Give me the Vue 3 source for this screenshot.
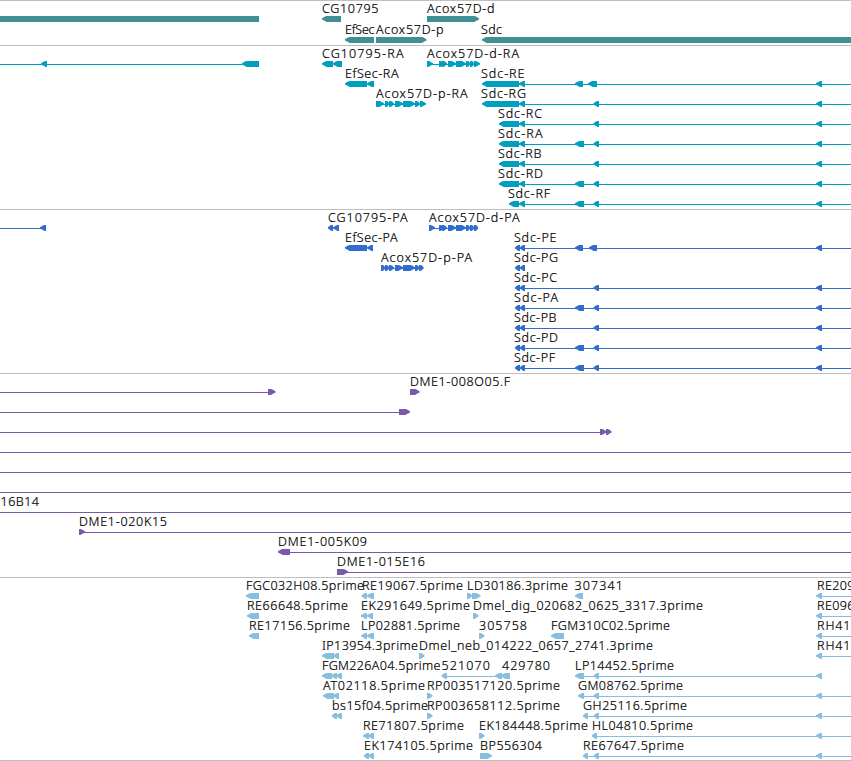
<script setup>
// Labels: [text, x, right edge]. Blocks: [start, end]. Lines: [start, end].
const W = 851
const row = (labels = [], left = [], right = [], lines = [], plain = []) => ({ labels, left, right, lines, plain })

const rnaRow = (name, x, end, start, extra) =>
  row([[name, x, end]], [[start, 519], [519, 525], ...extra, [816, 822]], [], [[519, W]])
const protRow = (name, end, extra) =>
  row([[name, 514, end]], [[515, 520], [520, 525], ...extra, [816, 822]], [], [[520, W]])

const A = [575, 584]
const B = [593.5, 599]
const full = () => row([], [], [], [[0, W]])

const tracks = [
  {
    id: 'gene',
    rows: [
      row([['CG10795', 322, 379], ['Acox57D-d', 427, 495]], [[322, 341]], [[427, 479]], [], [[0, 259]]),
      row([['EfSec', 345, 375], ['Acox57D-p', 376, 444], ['Sdc', 481, 502.5]], [[345, 374], [482, 860]], [[376, 426.5]]),
    ],
  },
  {
    id: 'rna',
    rows: [
      row(
        [['CG10795-RA', 322, 404], ['Acox57D-d-RA', 427, 519.5]],
        [[41, 47], [242, 259], [322, 333], [333, 342]],
        [[427, 433], [439, 443], [442, 447], [448, 456], [456, 466], [466, 470], [470, 474], [474, 480]],
        [[0, 247], [427, 478]],
      ),
      row(
        [['EfSec-RA', 345, 399], ['Sdc-RE', 481, 525]],
        [[345, 367], [367, 374], [482, 519], [519, 525], [575, 583], [588, 597], [816, 822]],
        [], [[519, W]],
      ),
      row(
        [['Acox57D-p-RA', 376, 468], ['Sdc-RG', 481, 526.5]],
        [[482, 519], [519, 525], B, [816, 822]],
        [[376, 384], [385, 389], [389, 394], [395, 403], [403, 415], [415, 420], [420, 426]],
        [[376, 424], [519, W]],
      ),
      rnaRow('Sdc-RC', 498, 542.5, 499, [B]),
      rnaRow('Sdc-RA', 498, 543, 499, [A, B]),
      rnaRow('Sdc-RB', 498, 542, 499, [B]),
      rnaRow('Sdc-RD', 498, 543.5, 499, [A, B]),
      rnaRow('Sdc-RF', 508, 550.5, 509, [A, B]),
    ],
  },
  {
    id: 'protein',
    rows: [
      row(
        [['CG10795-PA', 328, 408], ['Acox57D-d-PA', 429, 520]],
        [[40, 46], [328, 333], [333, 339]],
        [[429, 435], [439, 443], [442, 447], [448, 456], [456, 466], [466, 470], [470, 474], [474, 478]],
        [[0, 42], [429, 477]],
      ),
      row(
        [['EfSec-PA', 345, 398], ['Sdc-PE', 514, 557]],
        [[345, 367], [367, 373], [515, 520], [520, 525], [575, 583], [589, 597], [816, 822]],
        [], [[520, W]],
      ),
      row(
        [['Acox57D-p-PA', 381, 472.5], ['Sdc-PG', 514, 558.5]],
        [[515, 520], [520, 525]],
        [[381, 385], [385, 389], [389, 394], [395, 403], [403, 415], [415, 419], [419, 423.5]],
        [[381, 422]],
      ),
      protRow('Sdc-PC', 557.5, [B]),
      protRow('Sdc-PA', 558.5, [A, B]),
      protRow('Sdc-PB', 557, [B]),
      protRow('Sdc-PD', 558.5, [A, B]),
      protRow('Sdc-PF', 555.5, [A, B]),
    ],
  },
  {
    id: 'clone',
    rows: [
      row([['DME1-008O05.F', 410, 510.5]], [], [[268, 275.5], [410, 419.5]], [[0, 270]]),
      row([], [], [[399, 410]], [[0, 401]]),
      row([], [], [[600, 606.5], [606, 611.5]], [[0, 607]]),
      full(),
      full(),
      full(),
      row([['16B14', 0.5, 39.5]], [], [], [[0, W]]),
      row([['DME1-020K15', 79, 167.5]], [], [[79, 85]], [[79, W]]),
      row([['DME1-005K09', 278, 367.5]], [[278, 290]], [], [[288, W]]),
      row([['DME1-015E16', 337, 425.5]], [], [[337, 348]], [[340, W]]),
    ],
  },
  {
    id: 'est',
    rows: [
      row(
        [['FGC032H08.5prime', 246, 364.5], ['RE19067.5prime', 362, 463.5], ['LD30186.3prime', 467, 568.5], ['307341', 574.5, 623.5], ['RE209', 817, 855]],
        [[246, 259], [361.5, 367], [367, 374], [575, 583], [816, 822]],
        [[467, 472], [472, 480.5]], [[820, W]],
      ),
      row(
        [['RE66648.5prime', 247, 348.5], ['EK291649.5prime', 361, 470.5], ['Dmel_dig_020682_0625_3317.3prime', 473, 703.5], ['RE096', 817, 855]],
        [[247, 259], [361, 367], [367, 373], [816, 822]],
        [[473, 478.5]], [[820, W]],
      ),
      row(
        [['RE17156.5prime', 249, 350.5], ['LP02881.5prime', 361, 460.5], ['305758', 479, 527.5], ['FGM310C02.5prime', 551, 670.5], ['RH41', 817, 851]],
        [[249, 259], [361, 367], [367, 374], [551, 564], [816, 822]],
        [[479, 484.5]], [[820, W]],
      ),
      row(
        [['IP13954.3prime', 322, 418.5], ['Dmel_neb_014222_0657_2741.3prime', 419, 653.5], ['RH41', 817, 851]],
        [[322, 334], [333, 339], [816, 822]],
        [[419, 424.5]], [[820, W]],
      ),
      row(
        [['FGM226A04.5prime', 322, 441], ['521070', 441.5, 490.5], ['429780', 502, 550.5], ['LP14452.5prime', 575, 674.5]],
        [[322, 332], [331, 337], [336, 342], [441.5, 447], [495, 502], [501, 510], A, B, [816, 822]],
        [], [[445, 500], [580, 820]],
      ),
      row(
        [['AT02118.5prime', 323, 425.5], ['RP003517120.5prime', 427, 560.5], ['GM08762.5prime', 578, 683.5]],
        [[323, 334], [333, 339], [578, 584], B, [816, 822]],
        [[427, 432.5]], [[580, W]],
      ),
      row(
        [['bs15f04.5prime', 332, 428.5], ['RP003658112.5prime', 427, 560.5], ['GH25116.5prime', 583, 687.5]],
        [[332, 337], [336, 342], [583, 588], B, [816, 822]],
        [[427, 432.5]], [[585, W]],
      ),
      row(
        [['RE71807.5prime', 363, 464.5], ['EK184448.5prime', 479, 588.5], ['HL04810.5prime', 592, 693.5]],
        [[363, 369], [368, 374], [592, 597], [816, 822]],
        [[479, 484.5]], [[595, W]],
      ),
      row(
        [['EK174105.5prime', 364, 473.5], ['BP556304', 480, 542.5], ['RE67647.5prime', 583, 684.5]],
        [[364, 369], [368, 374], [583, 588], B, [816, 822]],
        [[480, 492]], [[585, W]],
      ),
    ],
  },
]

const leftArrow = ([a, b]) => {
  const n = Math.min(b, a + 6)
  return `M${a} 16.3L${n - 3} 14.5L${n - 1.5} 14H${b}V20H${n - 1.5}L${n - 3} 19L${a} 17.4Z`
}
const rightArrow = ([a, b]) => {
  const n = Math.max(a, b - 6)
  return `M${b} 16.3L${n + 3} 14.5L${n + 1.5} 14H${a}V20H${n + 1.5}L${n + 3} 19L${b} 17.4Z`
}
</script>

<template>
  <main class="browser">
    <section v-for="t in tracks" :key="t.id" class="track" :class="t.id">
      <svg v-for="(r, i) in t.rows" :key="i" class="row">
        <rect v-for="(l, k) in r.lines" :key="'l' + k" :x="l[0]" y="17" :width="l[1] - l[0]" height="1" />
        <rect v-for="(l, k) in r.plain" :key="'p' + k" :x="l[0]" y="14" :width="l[1] - l[0]" height="6" />
        <path v-for="(b, k) in r.left" :key="'a' + k" :d="leftArrow(b)" />
        <path v-for="(b, k) in r.right" :key="'b' + k" :d="rightArrow(b)" />
        <text v-for="(l, k) in r.labels" :key="'t' + k" :x="l[1]" y="11" :textLength="l[2] - l[1] - 0.5">{{ l[0] }}</text>
      </svg>
    </section>
  </main>
</template>

<style>
body {
  margin: 0;
  background: #fff;
}
</style>

<style scoped>
.browser {
  width: 851px;
  height: 761px;
  overflow: hidden;
  display: flex;
  flex-direction: column;
  background: #fff;
}
.track {
  flex: none;
  display: flex;
  flex-direction: column;
  border-top: 1px solid #bebebe;
  padding: 1px 0 2px;
}
.row {
  display: block;
  flex: none;
  width: 851px;
  height: 20px;
  overflow: visible;
}
text {
  font-family: "Noto Sans", sans-serif;
  font-size: 12.5px;
  font-weight: 300;
  fill: #000;
  stroke: #000;
  stroke-width: 0.2px;
}
.gene {
  fill: #3f8f94;
  padding-bottom: 1px;
}
.gene .row {
  height: 21px;
}
.rna {
  fill: #009fbf;
}
.protein {
  fill: #316dcd;
}
.clone {
  fill: #7859aa;
}
.est {
  fill: #88bedf;
  padding-bottom: 1px;
  border-bottom: 1px solid #bebebe;
}
</style>
